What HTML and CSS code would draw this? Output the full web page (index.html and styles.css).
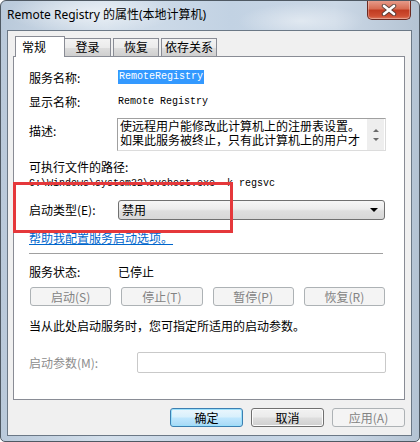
FILE: index.html
```html
<!DOCTYPE html>
<html>
<head>
<meta charset="utf-8">
<link rel="stylesheet" href="styles.css">
</head>
<body>
<div class="window">
  <div class="titlebar">
    <span class="title">Remote Registry 的属性(本地计算机)</span>
    <div class="close">
      <svg width="16" height="12" viewBox="0 0 16 12">
        <path d="M3 2 L13 10 M13 2 L3 10" stroke="#3b3b3b" stroke-width="4.5" stroke-linecap="round" fill="none" opacity="0.75"/>
        <path d="M3 2 L13 10 M13 2 L3 10" stroke="#ffffff" stroke-width="2.6" stroke-linecap="round" fill="none"/>
      </svg>
    </div>
  </div>
  <div class="client">
    <div class="tabs">
      <div class="tab active">常规</div>
      <div class="tab t2">登录</div>
      <div class="tab t3">恢复</div>
      <div class="tab t4">依存关系</div>
    </div>
    <div class="panel">
      <div class="row r1">
        <span class="label">服务名称:</span>
        <span class="mono selected">RemoteRegistry</span>
      </div>
      <div class="row r2">
        <span class="label">显示名称:</span>
        <span class="mono">Remote Registry</span>
      </div>
      <div class="row r3">
        <span class="label top">描述:</span>
        <div class="desc">
          <div class="desc-text"><div class="line">使远程用户能修改此计算机上的注册表设置。</div><div class="line">如果此服务被终止，只有此计算机上的用户才</div></div>
          <div class="scroll">
            <span class="arr up"></span>
            <span class="arr down"></span>
          </div>
        </div>
      </div>
      <div class="row r4">可执行文件的路径:</div>
      <div class="row r5"><span class="mono">C:\Windows\system32\svchost.exe -k regsvc</span></div>
      <div class="row r6">
        <span class="label">启动类型(E):</span>
        <div class="combo"><span>禁用</span><span class="caret"></span></div>
      </div>
      <div class="row r7"><span class="link">帮助我配置服务启动选项。</span></div>
      <div class="sep"></div>
      <div class="row r8">
        <span class="label">服务状态:</span>
        <span>已停止</span>
      </div>
      <div class="btnrow">
        <div class="btn dis">启动(S)</div>
        <div class="btn dis">停止(T)</div>
        <div class="btn dis">暂停(P)</div>
        <div class="btn dis">恢复(R)</div>
      </div>
      <div class="row r9">当从此处启动服务时，您可指定所适用的启动参数。</div>
      <div class="row r10">
        <span class="label wide disabled">启动参数(M):</span>
        <div class="input"></div>
      </div>
      <div class="mark"></div>
    </div>
    <div class="actions">
      <div class="btn ok">确定</div>
      <div class="btn normal">取消</div>
      <div class="btn dis">应用(A)</div>
    </div>
  </div>
</div>
</body>
</html>
```

FILE: styles.css
```css
* { box-sizing: border-box; }
html, body { margin: 0; padding: 0; }
body {
  width: 420px;
  height: 442px;
  overflow: hidden;
  background: #ffffff;
  font-family: "Noto Sans CJK SC", sans-serif;
  font-size: 12px;
  color: #000;
}
.window {
  width: 420px;
  height: 442px;
  border: 1px solid #4f5963;
  border-radius: 6px 6px 5px 5px;
  background:
    radial-gradient(ellipse 120px 30px at 90px 12px, rgba(255,255,255,0.55), rgba(255,255,255,0) 70%),
    radial-gradient(ellipse 90px 25px at 300px 20px, rgba(255,255,255,0.45), rgba(255,255,255,0) 70%),
    linear-gradient(90deg, #b9c9da 0%, #d3dfeb 25%, #c2d2e3 55%, #cbd8e6 80%, #b4c3d3 100%);
  display: flex;
  flex-direction: column;
  overflow: hidden;
}
.titlebar {
  height: 29px;
  display: flex;
  align-items: flex-start;
  padding-left: 6px;
  flex: none;
}
.title {
  font-family: "Noto Sans", "Noto Sans CJK SC", sans-serif;
  font-size: 12px;
  line-height: 14px;
  margin-top: 7px;
  color: #000;
}
.close {
  margin-left: auto;
  margin-right: 8px;
  margin-top: -1px;
  width: 44px;
  height: 20px;
  border: 1px solid #6b2a22;
  border-top: none;
  border-radius: 0 0 5px 5px;
  background: linear-gradient(180deg, #e8a090 0%, #d86e55 45%, #c13c22 55%, #cf4f33 85%, #de7c62 100%);
  box-shadow: inset 0 0 0 1px rgba(255,255,255,0.3);
  display: flex;
  align-items: center;
  justify-content: center;
}
.client {
  flex: 1;
  margin: 0 7px 5px 6px;
  border: 1px solid #6b7886;
  background: #f0f0f0;
  display: flex;
  flex-direction: column;
}
.tabs {
  height: 25px;
  padding-left: 7px;
  display: flex;
  align-items: flex-end;
  flex: none;
}
.tab {
  height: 18px;
  border: 1px solid #898c95;
  border-bottom: none;
  background: linear-gradient(180deg, #f3f3f3 0%, #ebebeb 50%, #dddddd 51%, #cfcfcf 100%);
  line-height: 16px;
  text-align: center;
  font-size: 12px;
}
.tab.active {
  width: 50px;
  height: 21px;
  margin-bottom: -1px;
  background: #ffffff;
  position: relative;
  z-index: 2;
  line-height: 19px;
  text-align: left;
  padding-left: 6px;
}
.tab.t2 { width: 47px; margin-left: -1px; }
.tab.t3 { width: 46px; margin-left: 2px; }
.tab.t4 { width: 56px; margin-left: 2px; }
.panel {
  position: relative;
  margin-left: 5px;
  width: 392px;
  height: 344px;
  background: #ffffff;
  border: 1px solid #898c95;
  padding: 12px 18px 0 15px;
  flex: none;
}
.row {
  display: flex;
  align-items: center;
  height: 16px;
  white-space: nowrap;
}
.label { width: 89px; flex: none; }
.label.wide { width: 108px; }
.label.top { align-self: flex-start; padding-top: 4px; }
.disabled { color: #8d8d8d; }
.mono {
  font-family: "Liberation Mono", "Noto Sans CJK SC", monospace;
  font-size: 10px;
}
.selected {
  background: #3399ff;
  color: #ffffff;
  line-height: 14px;
  padding: 0 1px;
}
.r2 { margin-top: 8px; }
.r3 { margin-top: 9px; height: 33px; align-items: flex-start; }
.desc {
  width: 269px;
  height: 33px;
  margin-left: -1px;
  border: 1px solid #a0a0a0;
  border-right-color: #dcdcdc;
  border-bottom-color: #dcdcdc;
  display: flex;
  background: #fff;
}
.desc-text {
  flex: 1;
  padding: 0 0 0 2px;
  overflow: hidden;
}
.line {
  height: 14px;
  line-height: 14px;
  white-space: nowrap;
}
.scroll {
  width: 17px;
  margin: 0 1px 0 0;
  background: #eeeeee;
  display: flex;
  flex-direction: column;
  justify-content: center;
  align-items: center;
  gap: 6px;
}
.arr {
  width: 0;
  height: 0;
  border-left: 3px solid transparent;
  border-right: 3px solid transparent;
}
.arr.up { border-bottom: 3px solid #6a6a6a; }
.arr.down { border-top: 3px solid #6a6a6a; }
.r4 { margin-top: 7px; }
.r5 { margin-top: 1px; }
.r6 { margin-top: 8px; height: 21px; }
.combo {
  width: 267px;
  height: 20px;
  border: 1px solid #707070;
  border-radius: 3px;
  background: linear-gradient(180deg, #f6f6f6 0%, #ececec 45%, #dedede 55%, #d7d7d7 100%);
  display: flex;
  align-items: center;
  padding: 0 6px 0 3px;
}
.caret {
  margin-left: auto;
  width: 0;
  height: 0;
  border-left: 4px solid transparent;
  border-right: 4px solid transparent;
  border-top: 4px solid #000;
}
.r7 { margin-top: 9px; }
.link { color: #0066cc; text-decoration: underline; }
.sep {
  margin-top: 8px;
  height: 1px;
  width: 354px;
  background: #a0a0a0;
}
.r8 { margin-top: 9px; }
.btnrow {
  margin-top: 8px;
  display: grid;
  grid-template-columns: repeat(4, 1fr);
  gap: 10px;
  width: 355px;
  margin-left: 1px;
}
.btn {
  height: 19px;
  border-radius: 3px;
  text-align: center;
  line-height: 17px;
  font-size: 12px;
}
.btn.dis {
  border: 1px solid #adb2b5;
  background: #f4f4f4;
  color: #838383;
}
.r9 { margin-top: 11px; }
.r10 { margin-top: 19px; height: 21px; }
.input {
  width: 249px;
  height: 21px;
  border: 1px solid #c9c9c9;
  border-radius: 2px;
  background: #ffffff;
}
.mark {
  position: absolute;
  left: -1px;
  top: 125px;
  width: 220px;
  height: 51px;
  border: 3px solid #e5383b;
}
.actions {
  margin-top: 8px;
  padding-right: 6px;
  display: flex;
  justify-content: flex-end;
  gap: 8px;
}
.actions .btn { width: 73px; }
.btn.ok {
  border: 1px solid #3c7fb1;
  background: linear-gradient(180deg, #eaf6fd 0%, #d9f0fc 45%, #bee6fd 55%, #a7d9f5 100%);
  box-shadow: inset 0 0 0 1px #9be0fb;
}
.btn.normal {
  border: 1px solid #707070;
  background: linear-gradient(180deg, #f2f2f2 0%, #ebebeb 45%, #dddddd 55%, #cfcfcf 100%);
  box-shadow: inset 0 0 0 1px #fcfcfc;
}
```
